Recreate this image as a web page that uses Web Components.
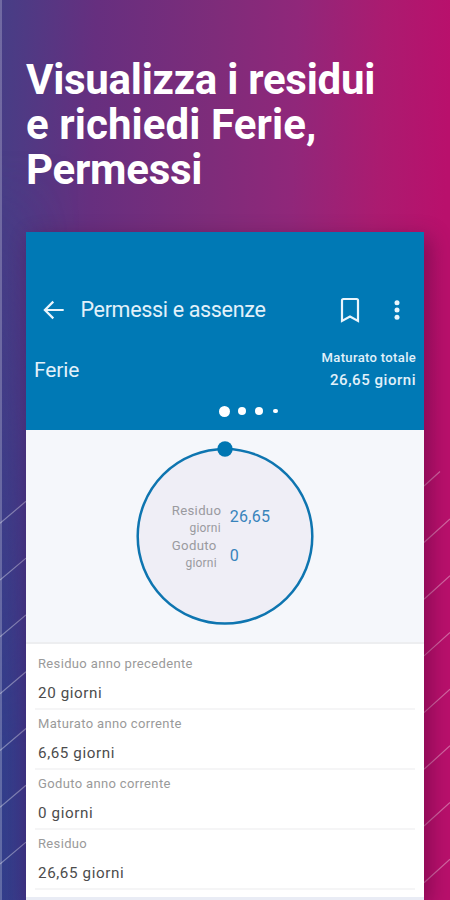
<!DOCTYPE html>
<html lang="it">
<head>
<meta charset="utf-8">
<title>Permessi e assenze</title>
<style>
html, body { margin: 0; height: 900px; overflow: hidden; }
body { font-family: Roboto, "Liberation Sans", sans-serif; }
</style>
</head>
<body>
<promo-page>
  <promo-title slot="title">
    <span style="letter-spacing:-.26px">Visualizza i residui</span>
    <span style="letter-spacing:.1px">e richiedi Ferie,</span>
    <span style="letter-spacing:-.25px">Permessi</span>
  </promo-title>
  <app-card>
    <app-header></app-header>
    <balance-ring></balance-ring>
    <detail-list>
      <detail-row label="Residuo anno precedente">20 giorni</detail-row>
      <detail-row label="Maturato anno corrente">6,65 giorni</detail-row>
      <detail-row label="Goduto anno corrente">0 giorni</detail-row>
      <detail-row label="Residuo">26,65 giorni</detail-row>
    </detail-list>
  </app-card>
</promo-page>
<script>
function define(name, html, setup) {
  customElements.define(name, class extends HTMLElement {
    constructor() {
      super();
      this.attachShadow({ mode: 'open' }).innerHTML = html;
    }
    connectedCallback() { if (setup) setup(this, this.shadowRoot); }
  });
}

define('promo-page', `
<style>
:host { display: block; position: relative; width: 450px; height: 900px; overflow: hidden;
  background: linear-gradient(92deg, #463e86 0%, #662f7f 20%, #7e2c7a 45%, #90277a 62%, #ab1b70 80%, #b9106c 94%); }
.tint { position: absolute; inset: 0; background:
  linear-gradient(90deg, rgba(48,63,139,.95) 0, rgba(48,56,139,.7) 26px, rgba(48,63,139,0) 80px);
  -webkit-mask-image: linear-gradient(#0000 150px, #000 750px); mask-image: linear-gradient(#0000 150px, #000 750px); }
.lines { position: absolute; left: 0; top: 0; }
.edge { position: absolute; left: 0; top: 0; width: 2px; height: 900px; background: rgba(255,255,255,.23); }
.flow { position: relative; display: flex; flex-direction: column; height: 100%; padding: 57px 26px 0; box-sizing: border-box; }
.heading { height: 174.5px; flex: none; }
</style>
<div class="tint"></div>
<svg class="lines" width="450" height="900" stroke="#fff" stroke-width="1.2"></svg>
<div class="edge"></div>
<div class="flow"><div class="heading"><slot name="title"></slot></div><slot></slot></div>`,
(el, root) => {
  let d = '';
  for (let i = 0; i < 7; i++) {
    const y = 523.3 + i * 56.8;
    d += `M0 ${y}L26 ${y - 22}`;
  }
  let r = 'M424 486L440 471.5';
  for (let i = 1; i < 8; i++) {
    const y = 485.8 + i * 56.7;
    r += `M424 ${y}L450 ${y - 23.5}`;
  }
  root.querySelector('svg').innerHTML =
    `<path d="${d}" stroke-opacity=".36"/><path d="${r}" stroke-opacity=".36"/>`;
});

define('promo-title', `
<style>
:host { display: flex; flex-direction: column; color: #fff; font: 700 42px/45px Roboto, sans-serif; white-space: nowrap; }
</style><slot></slot>`);

define('app-card', `
<style>
:host { display: flex; flex-direction: column; flex: 1; margin-right: .4px; background: #fff;
  box-shadow: 6px 6px 20px rgba(70,0,50,.45); overflow: hidden; }
</style><slot></slot>`);

define('app-header', `
<style>
:host { display: flex; flex-direction: column; height: 198px; flex: none; box-sizing: border-box; background: #0079b5; color: #e2f1fa; padding-top: 60.5px; }
.bar { display: flex; align-items: center; height: 36px; padding-left: 15px; }
h1 { margin: 0 0 0 15.5px; flex: 1; font: 400 21.5px/36px Roboto, sans-serif; letter-spacing: -.33px; }
.mark { margin-right: 33px; }
.more { margin-right: 23px; }
.sum { display: flex; justify-content: space-between; padding: 20px 7.5px 0 8px; height: 50px; box-sizing: content-box; }
.name { font-size: 21px; line-height: 44px; letter-spacing: -.1px; }
.total { text-align: right; font-size: 13px; line-height: 20px; font-weight: 500; letter-spacing: .35px; }
.total b { display: block; font-size: 15px; font-weight: 500; line-height: 24px; letter-spacing: .55px; }
.dots { display: flex; align-items: center; height: 12px; margin: 7px 0 0 193px; }
i { background: #fff; border-radius: 50%; }
</style>
<div class="bar">
  <svg width="24" height="24" viewBox="0 0 24 24" fill="none" stroke="#eaf5fc" stroke-width="2.2"><path d="M22.7 12H3.8M12.3 3.6L3.9 12L12.3 20.4"/></svg>
  <h1>Permessi e assenze</h1>
  <svg class="mark" width="20" height="26" viewBox="0 0 20 26" fill="none" stroke="#eaf5fc" stroke-width="2.2"><path d="M2 24V3.4Q2 2 3.4 2H16.6Q18 2 18 3.4V24L10 19.6Z"/></svg>
  <svg class="more" width="8" height="24" viewBox="0 0 8 24" fill="#eaf5fc"><circle cx="4" cy="4.7" r="2.5"/><circle cx="4" cy="12" r="2.5"/><circle cx="4" cy="19.3" r="2.5"/></svg>
</div>
<div class="sum"><div class="name">Ferie</div><div class="total">Maturato totale<b>26,65 giorni</b></div></div>
<div class="dots"><i style="width:11px;height:11px"></i><i style="width:8px;height:8px;margin-left:7.5px"></i><i style="width:8px;height:8px;margin-left:9px"></i><i style="width:4.5px;height:4.5px;margin-left:10.5px"></i></div>`);

define('balance-ring', `
<style>
:host { display: flex; justify-content: center; height: 214px; flex: none; box-sizing: border-box; background: #f5f7fb; border-bottom: 2px solid #edeef0; padding-top: 8.5px; }
.ring { display: grid; place-items: center; align-content: start; width: 180px; height: 188px; }
.ring > * { grid-area: 1 / 1; }
.data { display: grid; grid-template-columns: 49px auto; column-gap: 9px; align-self: start; justify-self: start; margin: 64px 0 0 37px; color: #9a9a9f; }
.label { font-size: 13.2px; line-height: 17.5px; letter-spacing: .3px; height: 35px; }
.label small { display: block; font-size: 12px; line-height: 17px; text-align: right; letter-spacing: .2px; }
.second small { padding-right: 4px; }
.num { font-size: 16px; line-height: 30px; color: #3884bc; letter-spacing: .25px; }
.second.num { padding-top: 3.5px; }
</style>
<div class="ring">
  <svg width="180" height="188" viewBox="0 0 180 188"><circle cx="90" cy="98.3" r="87.3" fill="#efeef6" stroke="#0e75b0" stroke-width="2.5"/><circle cx="90" cy="11" r="7.7" fill="#0076b2"/></svg>
  <div class="data">
    <div class="label">Residuo<small>giorni</small></div><div class="num">26,65</div>
    <div class="label second">Goduto<small>giorni</small></div><div class="num second">0</div>
  </div>
</div>`);

define('detail-list', `
<style>
:host { display: flex; flex-direction: column; flex: 1; padding: 6.5px 9px 0 9px; border-bottom: 3px solid #e9ecf5; }
</style><slot></slot>`);

define('detail-row', `
<style>
:host { display: flex; flex-direction: column; height: 60px; box-sizing: border-box; border-bottom: 2px solid #f5f5f6; padding: 5px 0 0 3px; color: #4c4c4c; font-size: 15.2px; line-height: 29px; letter-spacing: .6px; }
.label { font-size: 13px; line-height: 18px; letter-spacing: .35px; color: #9a9a9a; padding-bottom: 6px; }
</style><span class="label"></span><span><slot></slot></span>`,
(el, root) => { root.querySelector('.label').textContent = el.getAttribute('label'); });
</script>
</body>
</html>
